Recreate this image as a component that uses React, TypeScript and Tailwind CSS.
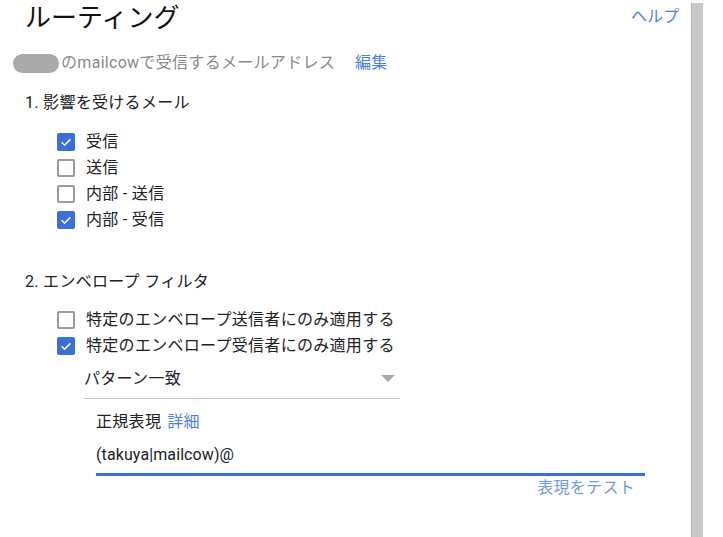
import React from "react";

const font = { fontFamily: 'Roboto, "Noto Sans CJK JP", sans-serif' };

function Box({ checked }: { checked: boolean }) {
  return checked ? (
    <span className="flex h-[18px] w-[18px] shrink-0 items-center justify-center rounded-[2px] bg-[#3b6fd9]">
      <svg width="14" height="14" viewBox="0 0 24 24">
        <path d="M4.5 12.5l5 5 10-10" fill="none" stroke="#fff" strokeWidth="2.6" />
      </svg>
    </span>
  ) : (
    <span className="h-[18px] w-[18px] shrink-0 rounded-[2px] border-2 border-[#9a9a9a] bg-white" />
  );
}

function Row({ checked, label }: { checked: boolean; label: string }) {
  return (
    <div className="flex h-[26px] items-center gap-[11px]">
      <Box checked={checked} />
      <span className="text-[16px] leading-[22px] tracking-[0.3px] text-[#202124]">{label}</span>
    </div>
  );
}

export default function App() {
  return (
    <div className="flex h-[537px] w-[723px] overflow-hidden bg-white" style={font}>
      <div className="flex flex-1 flex-col">
        <div className="flex items-start justify-between pr-[12px]">
          <h1 className="ml-[25px] mt-[1px] text-[26px] leading-[34px] text-[#111]">ルーティング</h1>
          <a className="mt-[6px] text-[16px] leading-[22px] text-[#4a7fe8]">ヘルプ</a>
        </div>
        <div className="ml-[13px] mt-[17px] flex h-[22px] items-center text-[16px] tracking-[0.3px]">
          <span className="h-[19px] w-[46px] rounded-full bg-[#a9a9ab]" />
          <span className="ml-[2px] text-[#8a8a8a]">のmailcowで受信するメールアドレス</span>
          <a className="ml-[20px] text-[#4a7fe8]">編集</a>
        </div>
        <div className="ml-[25px] mt-[17px] h-[24px] text-[16px] leading-[24px] tracking-[0.3px] text-[#202124]">1. 影響を受けるメール</div>
        <div className="ml-[57px] mt-[14px] flex flex-col">
          <Row checked label="受信" />
          <Row checked={false} label="送信" />
          <Row checked={false} label="内部 - 送信" />
          <Row checked label="内部 - 受信" />
        </div>
        <div className="ml-[25px] mt-[37px] h-[24px] text-[16px] leading-[24px] tracking-[0.3px] text-[#202124]">2. エンベロープ フィルタ</div>
        <div className="ml-[57px] mt-[13px] flex flex-col">
          <Row checked={false} label="特定のエンベロープ送信者にのみ適用する" />
          <Row checked label="特定のエンベロープ受信者にのみ適用する" />
        </div>
        <div className="ml-[84px] flex h-[40px] w-[316px] items-center justify-between border-b border-[#c4c4c4]">
          <span className="text-[16px] leading-[22px] tracking-[0.3px] text-[#202124]">パターン一致</span>
          <svg width="14" height="8" viewBox="0 0 14 8" className="mr-[5px]">
            <path d="M0 0h14L7 7z" fill="#a8a8a8" />
          </svg>
        </div>
        <div className="ml-[96px] mt-[12px] flex h-[22px] items-center gap-[6px] text-[16px] tracking-[0.3px]">
          <span className="text-[#202124]">正規表現</span>
          <a className="text-[#4a7fe8]">詳細</a>
        </div>
        <div className="ml-[96px] mt-[11px] w-[549px] border-b-[3px] border-[#3b6fd9] pb-[7px] text-[16px] leading-[22px] tracking-[0.1px] text-[#202124]">
          (takuya|mailcow)@
        </div>
        <div className="ml-[96px] mt-[2px] flex w-[539px] justify-end text-[16px] leading-[20px] tracking-[0.3px] text-[#6f9be8]">
          表現をテスト
        </div>
      </div>
      <div className="mt-[3px] w-[12px] border-l border-[#b9b9b9] bg-[#c8c8c8]" />
      <div className="w-[20px]" />
    </div>
  );
}
